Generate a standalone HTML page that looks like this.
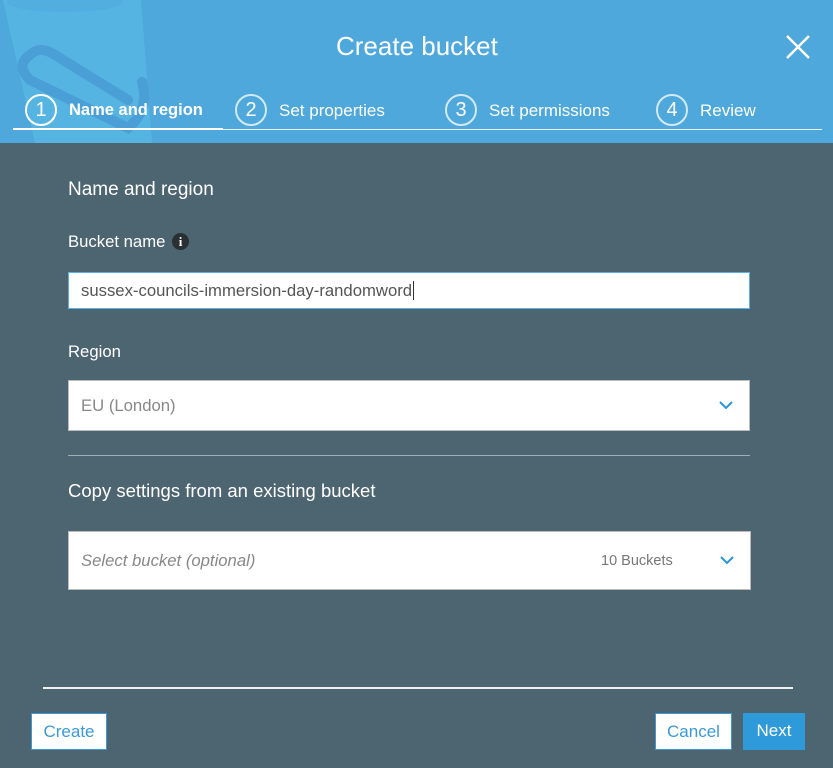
<!DOCTYPE html>
<html><head><meta charset="utf-8"><style>
body{margin:0;width:833px;height:768px;background:#4d6471;font-family:"Liberation Sans",sans-serif;overflow:hidden;position:relative}
.hdr{position:absolute;left:0;top:0;width:833px;height:143px;background:#4ea8dc;overflow:hidden}
.t{position:absolute;color:#fff;white-space:nowrap}
.circ{position:absolute;width:28px;height:28px;border:2px solid rgba(255,255,255,.75);border-radius:50%;color:#fff;font-size:20px;text-align:center;line-height:28px}
.box{position:absolute;background:#fff;border:1px solid #bbb;box-sizing:border-box}
.btn{position:absolute;height:37px;box-sizing:border-box;font-size:17px;text-align:center;line-height:35px}
</style></head><body>
<div class="hdr">
<svg width="200" height="143" style="position:absolute;left:0;top:0">
<path d="M3 0 L141 0 L152 143 L35 143 Z" fill="#56b4e3"/>
<ellipse cx="65" cy="2" rx="58" ry="10" fill="#4ea8dc" opacity=".5"/>
<path d="M30 55 Q15 65 30 80 L128 128 Q150 110 142 82" stroke="#4a9fd6" stroke-width="10" fill="none" stroke-linecap="round"/>
<path d="M30 55 Q40 45 55 55 L128 100" stroke="#4a9fd6" stroke-width="10" fill="none" stroke-linecap="round"/>
</svg>
<div class="t" style="left:336px;top:31px;font-size:26px">Create bucket</div>
<svg width="26" height="26" style="position:absolute;left:785px;top:34px"><path d="M2 2L24 24M24 2L2 24" stroke="#fff" stroke-width="2.5"/></svg>
<div class="circ" style="left:25px;top:94px;border-color:#fff">1</div>
<div class="t" style="left:69px;top:101px;font-size:16.5px;font-weight:bold">Name and region</div>
<div class="circ" style="left:235px;top:94px">2</div>
<div class="t" style="left:279px;top:101px;font-size:17px">Set properties</div>
<div class="circ" style="left:445px;top:94px">3</div>
<div class="t" style="left:489px;top:101px;font-size:17px">Set permissions</div>
<div class="circ" style="left:656px;top:94px">4</div>
<div class="t" style="left:700px;top:101px;font-size:17px">Review</div>
<div style="position:absolute;left:13px;top:128px;width:210px;height:2px;background:#fff"></div>
<div style="position:absolute;left:223px;top:129px;width:599px;height:1px;background:#e8f4fb"></div>
</div>
<div class="t" style="left:68px;top:179px;font-size:19px">Name and region</div>
<div class="t" style="left:68px;top:232px;font-size:16.7px">Bucket name</div>
<div style="position:absolute;left:172px;top:233px;width:17px;height:17px;border-radius:50%;background:#2a2f33;color:#fff;font-size:13px;font-weight:bold;text-align:center;line-height:17px;font-family:'Liberation Serif',serif">i</div>
<div class="box" style="left:68px;top:272px;width:682px;height:37px;border-color:#5ab1e8"><span style="position:absolute;left:12px;top:8px;font-size:16.7px;color:#555">sussex-councils-immersion-day-randomword<span style="border-left:1px solid #333;margin-left:1px"></span></span></div>
<div class="t" style="left:68px;top:342px;font-size:16.7px">Region</div>
<div class="box" style="left:68px;top:380px;width:682px;height:51px"><span style="position:absolute;left:12px;top:15px;font-size:16.7px;color:#888">EU (London)</span>
<svg width="14" height="9" style="position:absolute;left:650px;top:20px"><path d="M1 1L7 7L13 1" stroke="#2b96d6" stroke-width="2" fill="none"/></svg></div>
<div style="position:absolute;left:68px;top:455px;width:682px;height:1px;background:#a0aeb6"></div>
<div class="t" style="left:68px;top:480px;font-size:18.5px">Copy settings from an existing bucket</div>
<div class="box" style="left:68px;top:531px;width:683px;height:59px"><span style="position:absolute;left:12px;top:19px;font-size:16.7px;color:#888;font-style:italic">Select bucket (optional)</span>
<span style="position:absolute;left:532px;top:21px;font-size:14.5px;color:#777">10 Buckets</span>
<svg width="14" height="9" style="position:absolute;left:651px;top:24px"><path d="M1 1L7 7L13 1" stroke="#2b96d6" stroke-width="2" fill="none"/></svg></div>
<div style="position:absolute;left:43px;top:687px;width:750px;height:2px;background:#f0f0f0"></div>
<div class="btn" style="left:31px;top:713px;width:76px;background:#fff;border:1px solid #3a9ad8;color:#3a9ad8">Create</div>
<div class="btn" style="left:655px;top:713px;width:77px;background:#fff;border:1px solid #3a9ad8;color:#3a9ad8">Cancel</div>
<div class="btn" style="left:743px;top:713px;width:62px;background:#2f9ada;color:#fff">Next</div>
</body></html>
